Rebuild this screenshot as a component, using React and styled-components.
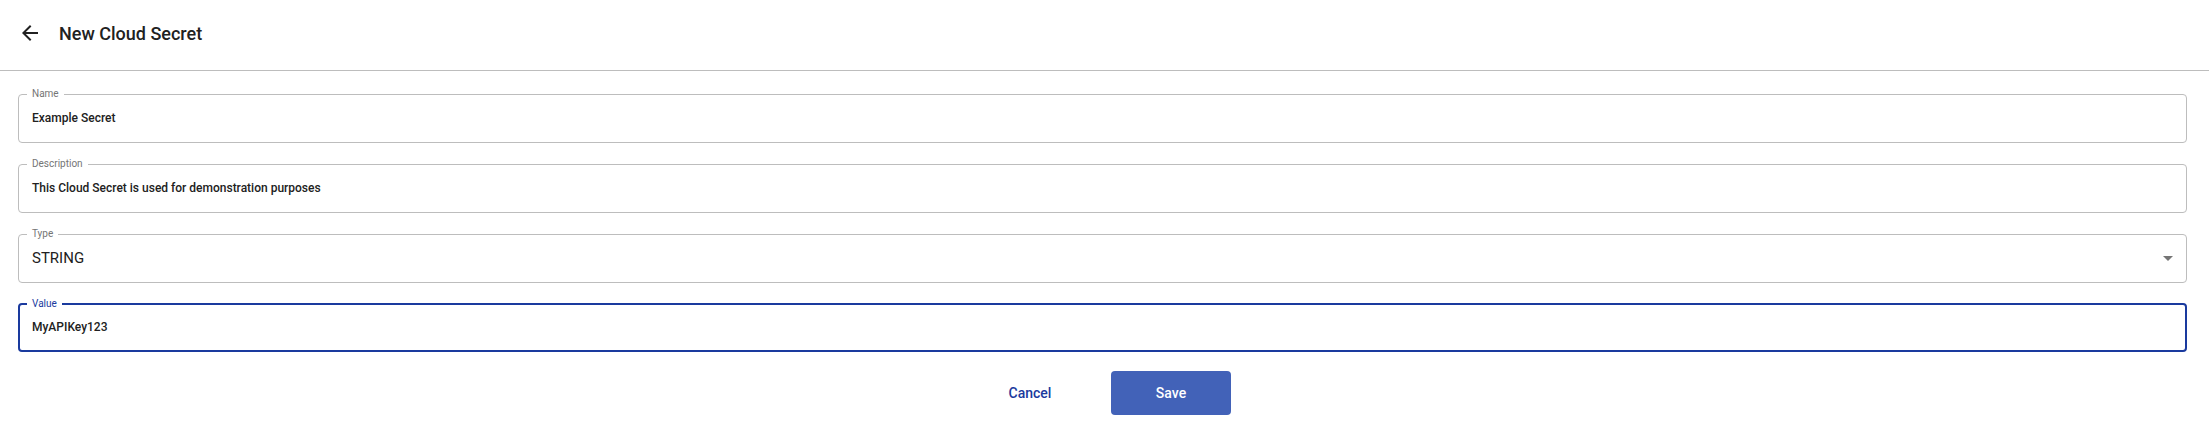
import React from "react";
import styled, { createGlobalStyle } from "styled-components";

const GlobalStyle = createGlobalStyle`
  body {
    margin: 0;
    background: #fff;
    font-family: Roboto, "Noto Sans", sans-serif;
    color: #212121;
  }
`;

const Page = styled.div`
  width: 100%;
`;

const Header = styled.div`
  height: 71px;
  display: flex;
  align-items: center;
  padding: 0 0 4px 18px;
  box-sizing: border-box;
  border-bottom: 1px solid #bdbdbd;
`;

const BackButton = styled.button`
  background: none;
  border: 0;
  padding: 0;
  width: 24px;
  height: 24px;
  display: flex;
  align-items: center;
  justify-content: center;
  cursor: pointer;
  color: #212121;
  margin-right: 17px;
`;

const Title = styled.h1`
  margin: 0;
  font-size: 18px;
  font-weight: 500;
  color: #212121;
`;

const Form = styled.div`
  padding: 17px 22px 0 18px;
  display: flex;
  flex-direction: column;
  gap: 15px;
`;

const Field = styled.fieldset`
  margin: 0;
  min-width: 0;
  padding: 0 13px 5px 8px;
  border: ${(p) => (p.$focused ? "2px solid #1a3a9e" : "1px solid #bdbdbd")};
  border-radius: 4px;
  box-sizing: border-box;
  height: ${(p) => (p.$focused ? "54px" : "55px")};
`;

const Legend = styled.legend`
  padding: 0 5px;
  margin-left: ${(p) => (p.$focused ? "-1px" : "0")};
  font-size: 10px;
  line-height: 12px;
  color: ${(p) => (p.$focused ? "#1a3a9e" : "#757575")};
`;

const Value = styled.div`
  height: ${(p) => (p.$focused ? "33px" : "36px")};
  display: flex;
  align-items: center;
  justify-content: space-between;
  padding-left: ${(p) => (p.$focused ? "4px" : "5px")};
  font-size: ${(p) => (p.$large ? "15px" : "12px")};
  font-weight: ${(p) => (p.$large ? 400 : 500)};
  color: #212121;
`;

const Caret = styled.span`
  width: 0;
  height: 0;
  border-left: 5px solid transparent;
  border-right: 5px solid transparent;
  border-top: 5px solid #757575;
`;

const Actions = styled.div`
  display: flex;
  justify-content: center;
  gap: 21px;
  padding: 4px 4px 0 0;
`;

const Button = styled.button`
  width: 120px;
  height: 44px;
  border: 0;
  border-radius: 4px;
  font-family: Roboto, sans-serif;
  font-size: 14px;
  font-weight: 500;
  cursor: pointer;
  background: ${(p) => (p.$primary ? "#4262b8" : "transparent")};
  color: ${(p) => (p.$primary ? "#ffffff" : "#1a3a9e")};
`;

const fields = [
  { label: "Name", value: "Example Secret" },
  { label: "Description", value: "This Cloud Secret is used for demonstration purposes" },
  { label: "Type", value: "STRING", select: true },
  { label: "Value", value: "MyAPIKey123", focused: true },
];

export default function App() {
  return (
    <Page>
      <GlobalStyle />
      <Header>
        <BackButton aria-label="Back">
          <svg width="24" height="24" viewBox="0 0 24 24" fill="currentColor">
            <path d="M20 11H7.83l5.59-5.59L12 4l-8 8 8 8 1.41-1.41L7.83 13H20v-2z" />
          </svg>
        </BackButton>
        <Title>New Cloud Secret</Title>
      </Header>
      <Form>
        {fields.map((f) => (
          <Field key={f.label} $focused={f.focused}>
            <Legend $focused={f.focused}>{f.label}</Legend>
            <Value $large={f.select} $focused={f.focused}>
              {f.value}
              {f.select && <Caret />}
            </Value>
          </Field>
        ))}
        <Actions>
          <Button>Cancel</Button>
          <Button $primary>Save</Button>
        </Actions>
      </Form>
    </Page>
  );
}
